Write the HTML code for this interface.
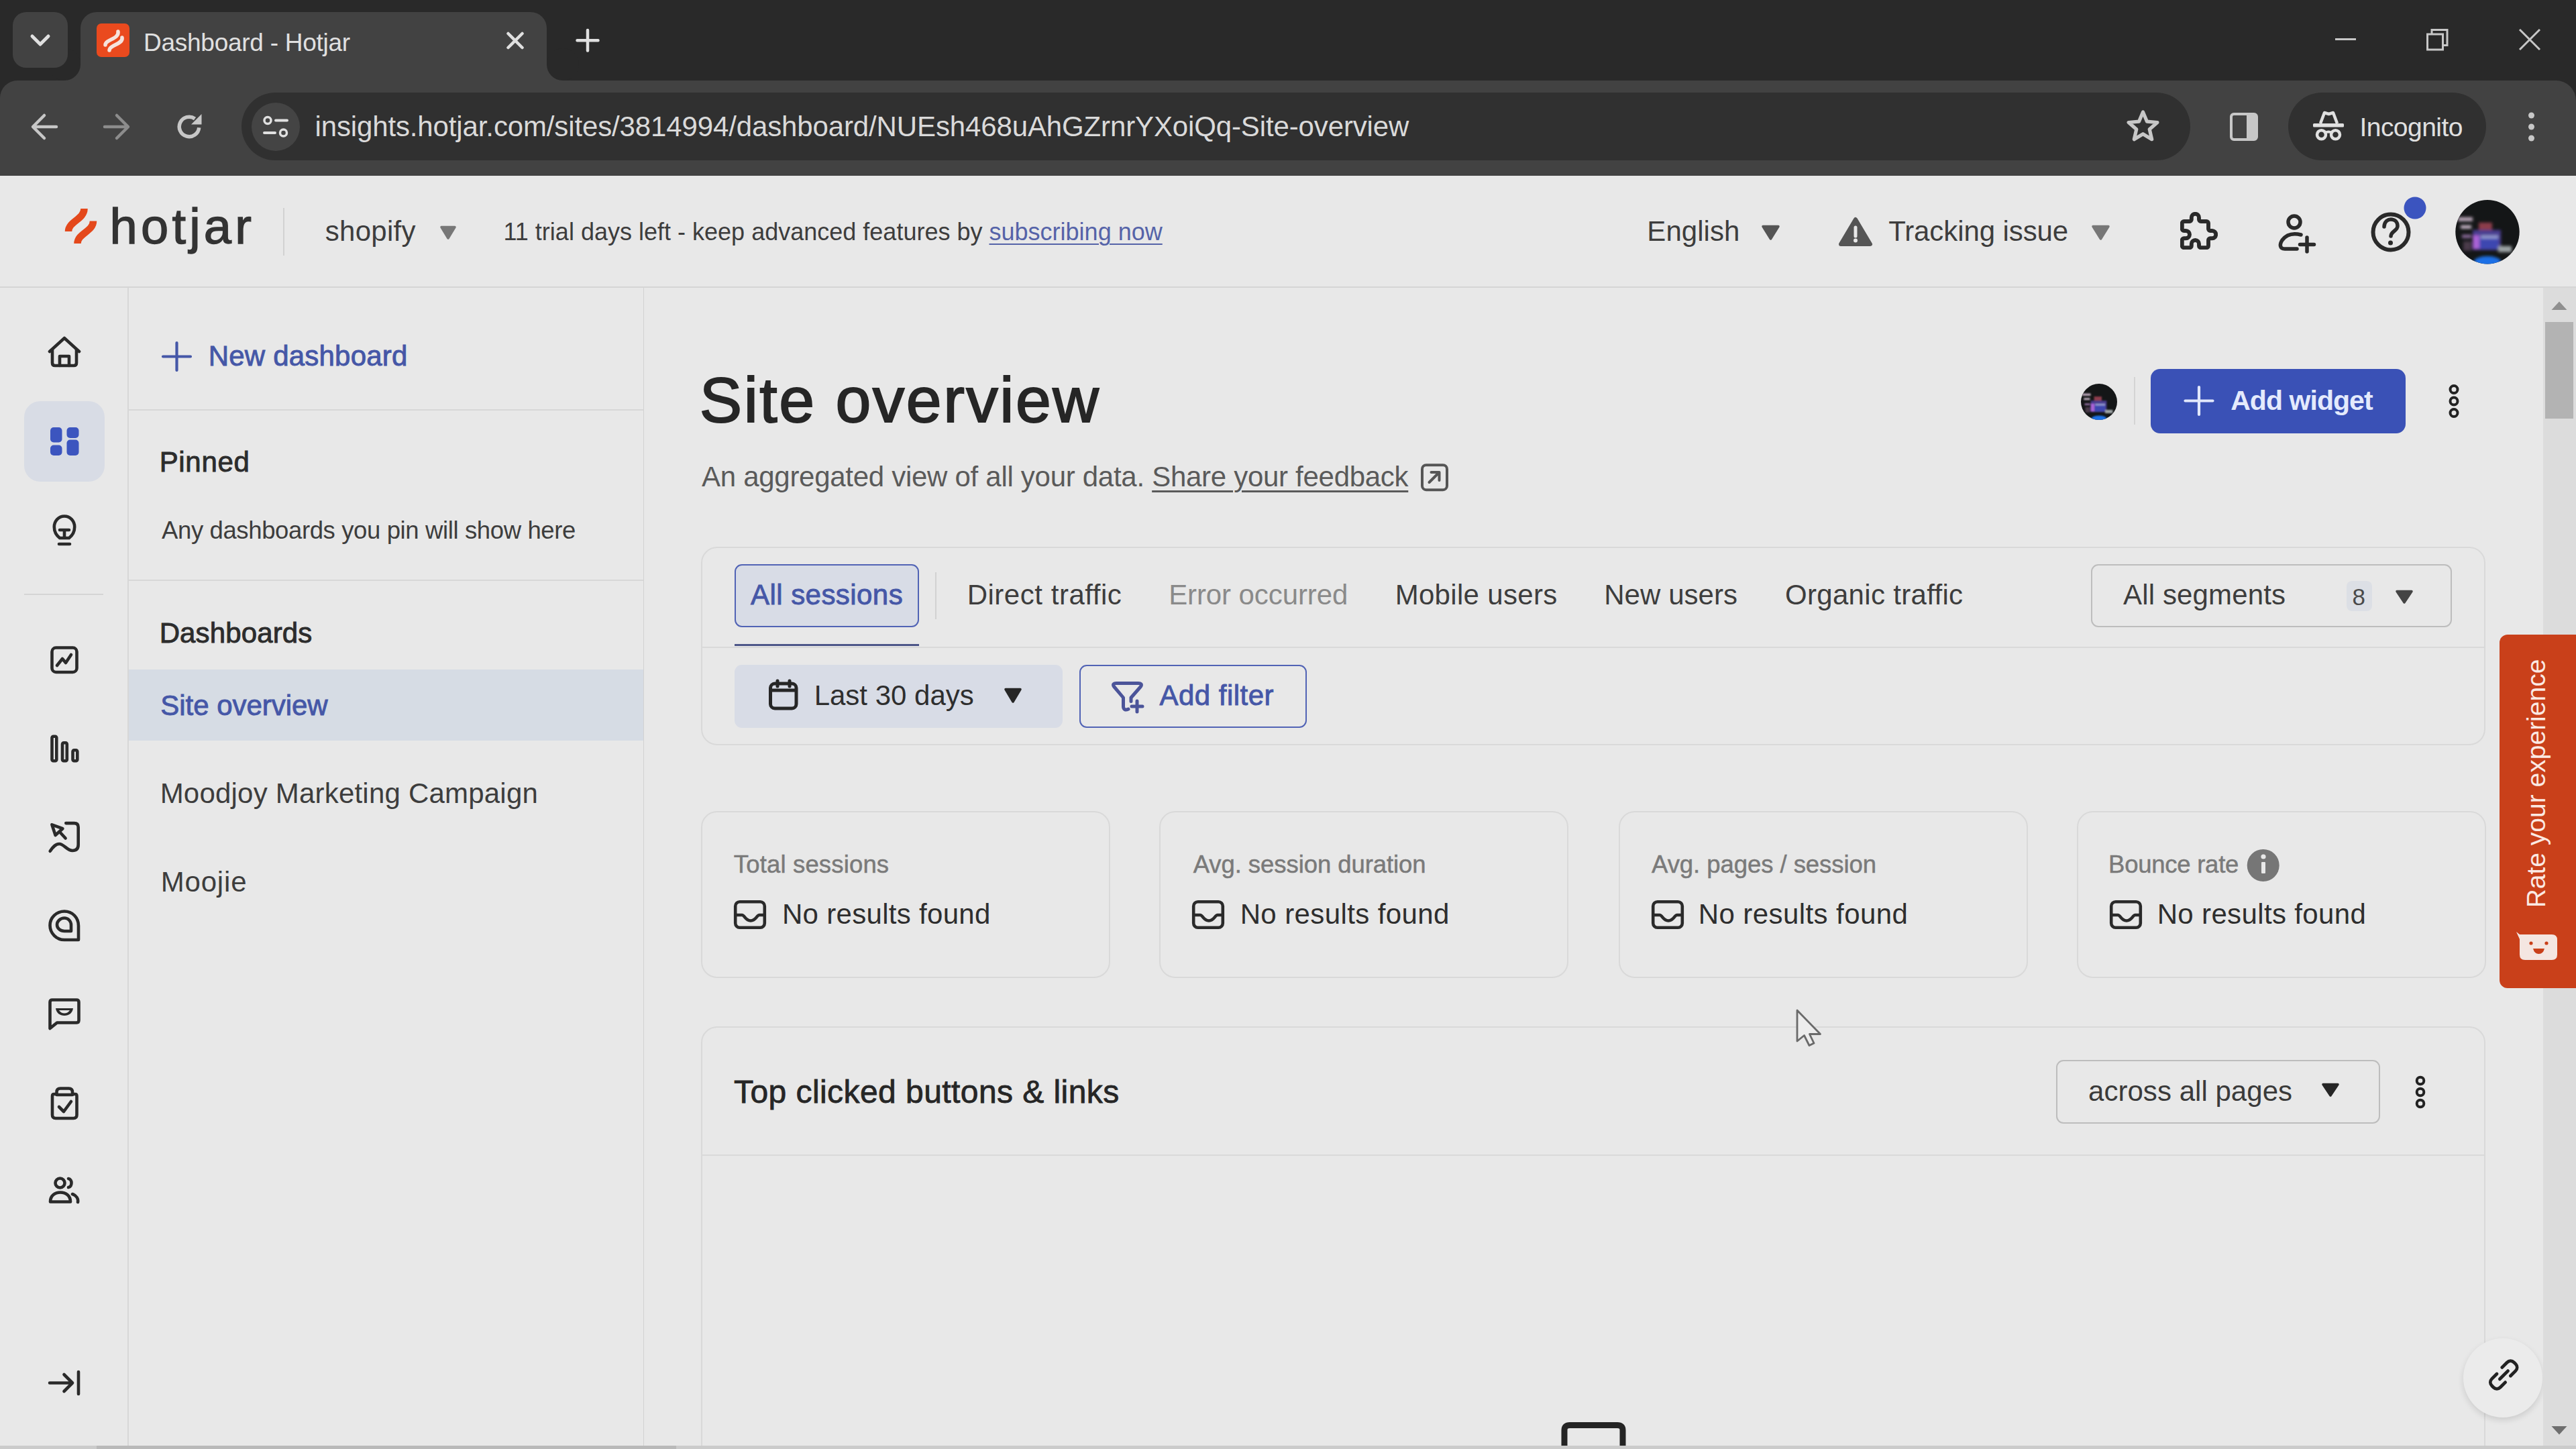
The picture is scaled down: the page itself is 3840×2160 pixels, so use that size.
<!DOCTYPE html>
<html><head><meta charset="utf-8"><title>Dashboard - Hotjar</title>
<style>
html,body{margin:0;padding:0;width:3840px;height:2160px;overflow:hidden;background:#e8e8e8;font-family:'Liberation Sans', sans-serif;}
</style></head><body>
<div style="position:absolute;left:0px;top:0px;width:3840px;height:262px;background:#292929"></div>
<div style="position:absolute;left:0px;top:120px;width:3840px;height:142px;background:#424242;border-radius:26px 30px 0 0"></div>
<div style="position:absolute;left:96px;top:96px;width:24px;height:24px;background:#424242"></div>
<div style="position:absolute;left:72px;top:72px;width:48px;height:48px;background:#292929;border-radius:50%"></div>
<div style="position:absolute;left:19px;top:18px;width:82px;height:83px;background:#424242;border-radius:20px"></div>
<svg style="position:absolute;left:0;top:0" width="3840" height="2160" viewBox="0 0 3840 2160" fill="none"><polyline points="48,54 60,66 72,54" stroke="#e0e0e0" stroke-width="5" stroke-linecap="round" stroke-linejoin="round"/></svg>
<div style="position:absolute;left:815px;top:96px;width:24px;height:24px;background:#424242"></div>
<div style="position:absolute;left:815px;top:72px;width:48px;height:48px;background:#292929;border-radius:50%"></div>
<div style="position:absolute;left:120px;top:18px;width:695px;height:110px;background:#424242;border-radius:24px 24px 0 0"></div>
<div style="position:absolute;left:144px;top:35px;width:49px;height:50px;background:#ea4a1e;border-radius:7px"></div>
<svg style="position:absolute;left:0;top:0" width="3840" height="2160" viewBox="0 0 3840 2160" fill="none"><path d="M157 67 C157 59 178 58 176 47" stroke="#f6e3dc" stroke-width="5.5" stroke-linecap="round"/><path d="M163 75 C163 67 184 66 182 56" stroke="#f6e3dc" stroke-width="5.5" stroke-linecap="round"/></svg>
<div style="position:absolute;left:214.04px;top:44.62px;font-size:37.00px;line-height:37.00px;letter-spacing:-0.261px;color:#e0e0e0;white-space:nowrap;">Dashboard - Hotjar</div>
<svg style="position:absolute;left:0;top:0" width="3840" height="2160" viewBox="0 0 3840 2160" fill="none"><path d="M757.5 50 L778.5 71 M778.5 50 L757.5 71" stroke="#e0e0e0" stroke-width="4.5" stroke-linecap="round"/><path d="M876 45 V75.5 M860.5 60.2 H891.5" stroke="#e0e0e0" stroke-width="4.5" stroke-linecap="round"/></svg>
<svg style="position:absolute;left:0;top:0" width="3840" height="2160" viewBox="0 0 3840 2160" fill="none"><path d="M50 189 H84 M66 172 L49 189 L66 206" stroke="#c7c7c7" stroke-width="4.5" stroke-linecap="round" stroke-linejoin="round"/><path d="M156 189 H190 M174 172 L191 189 L174 206" stroke="#8c8c8c" stroke-width="4.5" stroke-linecap="round" stroke-linejoin="round"/><path d="M296.7 190.3 A14.75 14.75 0 1 1 290.5 176.9" stroke="#c7c7c7" stroke-width="5.5"/><path d="M300.5 170 V185.5 H285 Z" fill="#c7c7c7"/></svg>
<div style="position:absolute;left:360px;top:138px;width:2905px;height:101px;background:#303030;border-radius:51px"></div>
<div style="position:absolute;left:375px;top:153px;width:72px;height:72px;background:#444444;border-radius:50%"></div>
<svg style="position:absolute;left:0;top:0" width="3840" height="2160" viewBox="0 0 3840 2160" fill="none"><circle cx="399" cy="179.5" r="5" stroke="#e0e0e0" stroke-width="3.5"/><path d="M411 179.5 H428" stroke="#e0e0e0" stroke-width="4" stroke-linecap="round"/><path d="M394 198 H410" stroke="#e0e0e0" stroke-width="4" stroke-linecap="round"/><circle cx="422.5" cy="198" r="5" stroke="#e0e0e0" stroke-width="3.5"/></svg>
<div style="position:absolute;left:469.48px;top:167.88px;font-size:42.00px;line-height:42.00px;letter-spacing:-0.130px;color:#dadada;white-space:nowrap;">insights.hotjar.com/sites/3814994/dashboard/NUEsh468uAhGZrnrYXoiQq-Site-overview</div>
<svg style="position:absolute;left:0;top:0" width="3840" height="2160" viewBox="0 0 3840 2160" fill="none"><polygon points="3194.5,167.0 3200.5,181.2 3215.9,182.5 3204.2,192.7 3207.7,207.7 3194.5,199.7 3181.3,207.7 3184.8,192.7 3173.1,182.5 3188.5,181.2" stroke="#c7c7c7" stroke-width="5.2" stroke-linejoin="round"/></svg>
<svg style="position:absolute;left:0;top:0" width="3840" height="2160" viewBox="0 0 3840 2160" fill="none"><rect x="3326" y="170" width="38" height="38" rx="4" stroke="#c7c7c7" stroke-width="4"/><rect x="3349" y="170" width="15" height="38" fill="#c7c7c7"/></svg>
<div style="position:absolute;left:3411px;top:138px;width:295px;height:101px;background:#303030;border-radius:51px"></div>
<svg style="position:absolute;left:0;top:0" width="3840" height="2160" viewBox="0 0 3840 2160" fill="none"><rect x="3448" y="184" width="46" height="5.5" rx="1.5" fill="#e0e0e0"/><path d="M3459 184 L3465 168 L3471.5 170 L3478 168 L3484 184" stroke="#e0e0e0" stroke-width="4.5" stroke-linejoin="round"/><circle cx="3460.5" cy="200.7" r="6.5" stroke="#e0e0e0" stroke-width="4.5"/><circle cx="3481.5" cy="200.7" r="6.5" stroke="#e0e0e0" stroke-width="4.5"/><path d="M3466 198 Q3471 195 3476 198" stroke="#e0e0e0" stroke-width="4"/></svg>
<div style="position:absolute;left:3517.49px;top:170.33px;font-size:39.00px;line-height:39.00px;letter-spacing:-0.546px;color:#e0e0e0;white-space:nowrap;">Incognito</div>
<svg style="position:absolute;left:0;top:0" width="3840" height="2160" viewBox="0 0 3840 2160" fill="none"><circle cx="3773.5" cy="172" r="4.5" fill="#c7c7c7"/><circle cx="3773.5" cy="189" r="4.5" fill="#c7c7c7"/><circle cx="3773.5" cy="206" r="4.5" fill="#c7c7c7"/></svg>
<svg style="position:absolute;left:0;top:0" width="3840" height="2160" viewBox="0 0 3840 2160" fill="none"><path d="M3481 58.5 H3512" stroke="#c7c7c7" stroke-width="3"/><rect x="3618.5" y="51" width="23" height="23" stroke="#c7c7c7" stroke-width="3"/><path d="M3625 51 V44.5 H3648 V67.5 H3641.5" stroke="#c7c7c7" stroke-width="3"/><path d="M3756 44 L3786 74 M3786 44 L3756 74" stroke="#c7c7c7" stroke-width="3"/></svg>
<div style="position:absolute;left:0px;top:427px;width:3840px;height:2px;background:#d5d5d5"></div>
<svg style="position:absolute;left:0;top:0" width="3840" height="2160" viewBox="0 0 3840 2160" fill="none"><path d="M102 345 C102 330 125.5 327 125.5 311" stroke="#e4481b" stroke-width="10.5"/><path d="M115.5 363 C115.5 348 139 345 139 329.5" stroke="#e4481b" stroke-width="10.5"/></svg>
<div style="position:absolute;left:163.55px;top:300.86px;font-size:74.11px;line-height:74.11px;letter-spacing:5.206px;color:#333333;white-space:nowrap;-webkit-text-stroke:1.4px #333333;">hotjar</div>
<div style="position:absolute;left:422px;top:310px;width:2px;height:71px;background:#d2d2d2"></div>
<div style="position:absolute;left:484.86px;top:323.88px;font-size:42.00px;line-height:42.00px;letter-spacing:0.261px;color:#3d3d3d;white-space:nowrap;">shopify</div>
<svg style="position:absolute;left:0;top:0" width="3840" height="2160" viewBox="0 0 3840 2160" fill="none"><path d="M658 338.5 H678 L668.0 355 Z" fill="#777777" stroke="#777777" stroke-width="3.5" stroke-linejoin="round"/></svg>
<div style="position:absolute;left:750.48px;top:327.97px;font-size:36.00px;line-height:36.00px;letter-spacing:0.006px;color:#3d3d3d;white-space:nowrap;">11 trial days left - keep advanced features by <span style="color:#5563a8;text-decoration:underline;text-decoration-thickness:2px;text-underline-offset:5px">subscribing now</span></div>
<div style="position:absolute;left:2455.34px;top:323.78px;font-size:42.00px;line-height:42.00px;letter-spacing:0.045px;color:#3d3d3d;white-space:nowrap;">English</div>
<svg style="position:absolute;left:0;top:0" width="3840" height="2160" viewBox="0 0 3840 2160" fill="none"><path d="M2628 337.5 H2651 L2639.5 356 Z" fill="#555555" stroke="#555555" stroke-width="3.5" stroke-linejoin="round"/></svg>
<svg style="position:absolute;left:0;top:0" width="3840" height="2160" viewBox="0 0 3840 2160" fill="none"><path d="M2766 327 L2788 364 H2744 Z" fill="#555555" stroke="#555555" stroke-width="6" stroke-linejoin="round"/><path d="M2766 339 V352" stroke="#e8e8e8" stroke-width="5" stroke-linecap="round"/><circle cx="2766" cy="358.5" r="3" fill="#e8e8e8"/></svg>
<div style="position:absolute;left:2815.16px;top:323.98px;font-size:42.00px;line-height:42.00px;letter-spacing:-0.088px;color:#3d3d3d;white-space:nowrap;">Tracking issue</div>
<svg style="position:absolute;left:0;top:0" width="3840" height="2160" viewBox="0 0 3840 2160" fill="none"><path d="M3120 337.5 H3143 L3131.5 356 Z" fill="#777777" stroke="#777777" stroke-width="3.5" stroke-linejoin="round"/></svg>
<svg style="position:absolute;left:3250px;top:316px;" width="56" height="56" viewBox="2 2 20 20" fill="none"><path d="M4 7h3a1 1 0 0 0 1 -1v-1a2 2 0 0 1 4 0v1a1 1 0 0 0 1 1h3a1 1 0 0 1 1 1v3a1 1 0 0 0 1 1h1a2 2 0 0 1 0 4h-1a1 1 0 0 0 -1 1v3a1 1 0 0 1 -1 1h-3a1 1 0 0 1 -1 -1v-1a2 2 0 0 0 -4 0v1a1 1 0 0 1 -1 1h-3a1 1 0 0 1 -1 -1v-3a1 1 0 0 1 1 -1h1a2 2 0 0 0 0 -4h-1a1 1 0 0 1 -1 -1v-3a1 1 0 0 1 1 -1" stroke="#2a2a2a" stroke-width="2.1" stroke-linejoin="round"/></svg>
<svg style="position:absolute;left:0;top:0" width="3840" height="2160" viewBox="0 0 3840 2160" fill="none"><circle cx="3420" cy="331" r="9" stroke="#2a2a2a" stroke-width="5.5"/><path d="M3424 371 H3406 C3398 371 3398 364 3402 358 C3408 350 3418 347 3430 350" stroke="#2a2a2a" stroke-width="5.5" stroke-linecap="round"/><path d="M3439 354 V375 M3428.5 364.5 H3449.5" stroke="#2a2a2a" stroke-width="5.5" stroke-linecap="round"/></svg>
<svg style="position:absolute;left:0;top:0" width="3840" height="2160" viewBox="0 0 3840 2160" fill="none"><circle cx="3564" cy="346" r="26.5" stroke="#2a2a2a" stroke-width="6"/><path d="M3554 338 C3554 331 3559 327 3564 327 C3570 327 3574 331 3574 337 C3574 344 3564 345 3564 352" stroke="#2a2a2a" stroke-width="5.5" stroke-linecap="round"/><circle cx="3563.5" cy="362" r="3.5" fill="#2a2a2a"/><circle cx="3600" cy="310" r="16.5" fill="#3b54bf"/></svg>
<svg style="position:absolute;left:0;top:0" width="3840" height="2160" viewBox="0 0 3840 2160" fill="none"><defs><clipPath id="avc"><circle cx="0" cy="0" r="47.7"/></clipPath><filter id="bl" x="-50%" y="-50%" width="200%" height="200%"><feGaussianBlur stdDeviation="2.2"/></filter></defs><g transform="translate(3708 345.8)"><circle cx="0" cy="0" r="47.7" fill="#141617"/><g clip-path="url(#avc)" filter="url(#bl)"><rect x="-44" y="-22" width="22" height="6" fill="#b9a6b8"/><rect x="-40" y="-10" width="16" height="5" fill="#cbb9cb"/><rect x="-38" y="4" width="14" height="5" fill="#8a6a9a"/><rect x="-36" y="14" width="12" height="14" fill="#4a3a4a"/><rect x="-13" y="-14" width="20" height="12" fill="#8c3c4c"/><rect x="-22" y="-3" width="42" height="30" fill="#4a3c90"/><rect x="-22" y="5" width="10" height="20" fill="#a862d6"/><rect x="-12" y="8" width="28" height="18" fill="#3e46b0"/><rect x="-10" y="5" width="26" height="5" fill="#9096cc"/><ellipse cx="0" cy="44" rx="20" ry="8" fill="#1f70e6"/><rect x="16" y="21" width="20" height="9" fill="#9ea4a6"/></g></g><g transform="translate(3129 599) scale(0.566)"><circle cx="0" cy="0" r="47.7" fill="#141617"/><g clip-path="url(#avc)" filter="url(#bl)"><rect x="-44" y="-22" width="22" height="6" fill="#b9a6b8"/><rect x="-40" y="-10" width="16" height="5" fill="#cbb9cb"/><rect x="-38" y="4" width="14" height="5" fill="#8a6a9a"/><rect x="-36" y="14" width="12" height="14" fill="#4a3a4a"/><rect x="-13" y="-14" width="20" height="12" fill="#8c3c4c"/><rect x="-22" y="-3" width="42" height="30" fill="#4a3c90"/><rect x="-22" y="5" width="10" height="20" fill="#a862d6"/><rect x="-12" y="8" width="28" height="18" fill="#3e46b0"/><rect x="-10" y="5" width="26" height="5" fill="#9096cc"/><ellipse cx="0" cy="44" rx="20" ry="8" fill="#1f70e6"/><rect x="16" y="21" width="20" height="9" fill="#9ea4a6"/></g></g></svg>
<div style="position:absolute;left:190px;top:429px;width:2px;height:1727px;background:#d7d7d7"></div>
<div style="position:absolute;left:36px;top:598px;width:120px;height:120px;background:#d8dce5;border-radius:24px"></div>
<div style="position:absolute;left:36px;top:885px;width:118px;height:2px;background:#d4d4d4"></div>
<svg style="position:absolute;left:0;top:0" width="3840" height="2160" viewBox="0 0 3840 2160" fill="none"><path d="M74 524 L96 504 L118 524" stroke="#2a2a2a" stroke-width="4.6" stroke-linecap="round" stroke-linejoin="round"/><path d="M78 521 V541 Q78 545 82 545 H110 Q114 545 114 541 V521" stroke="#2a2a2a" stroke-width="4.6" stroke-linecap="round" stroke-linejoin="round"/><path d="M89 545 V531 H103 V545" stroke="#2a2a2a" stroke-width="4.6" stroke-linecap="round" stroke-linejoin="round"/></svg>
<svg style="position:absolute;left:0;top:0" width="3840" height="2160" viewBox="0 0 3840 2160" fill="none"><rect x="75" y="637" width="17.5" height="22.5" rx="5" fill="#3c55bf"/><rect x="75" y="663.5" width="17.5" height="15.5" rx="5" fill="#3c55bf"/><rect x="99.5" y="637" width="18" height="16" rx="5" fill="#3c55bf"/><rect x="99.5" y="655.5" width="18" height="23.5" rx="5" fill="#3c55bf"/></svg>
<svg style="position:absolute;left:0;top:0" width="3840" height="2160" viewBox="0 0 3840 2160" fill="none"><path d="M89 802 C84 798 80.8 792 80.8 785.5 C80.8 776.5 87.5 769.5 96 769.5 C104.5 769.5 111.2 776.5 111.2 785.5 C111.2 792 108 798 103 802 Z" stroke="#2a2a2a" stroke-width="4.6" stroke-linecap="round" stroke-linejoin="round"/><path d="M89 790 H103 M96 790 V801" stroke="#2a2a2a" stroke-width="4.6" stroke-linecap="round" stroke-linejoin="round"/><path d="M88 811 H104" stroke="#2a2a2a" stroke-width="4.6" stroke-linecap="round" stroke-linejoin="round"/></svg>
<svg style="position:absolute;left:0;top:0" width="3840" height="2160" viewBox="0 0 3840 2160" fill="none"><rect x="77.5" y="965.5" width="37" height="36.5" rx="6" stroke="#2a2a2a" stroke-width="4.6" stroke-linecap="round" stroke-linejoin="round"/><path d="M85 992 L93 982 L98 988 L106 976" stroke="#2a2a2a" stroke-width="4.6" stroke-linecap="round" stroke-linejoin="round"/></svg>
<svg style="position:absolute;left:0;top:0" width="3840" height="2160" viewBox="0 0 3840 2160" fill="none"><rect x="77.5" y="1097.8" width="6.8" height="36.5" rx="2" stroke="#2a2a2a" stroke-width="4.6" stroke-linecap="round" stroke-linejoin="round"/><rect x="93" y="1107.3" width="6.8" height="27" rx="2" stroke="#2a2a2a" stroke-width="4.6" stroke-linecap="round" stroke-linejoin="round"/><rect x="108.5" y="1118.3" width="6.8" height="16" rx="2" stroke="#2a2a2a" stroke-width="4.6" stroke-linecap="round" stroke-linejoin="round"/></svg>
<svg style="position:absolute;left:0;top:0" width="3840" height="2160" viewBox="0 0 3840 2160" fill="none"><path d="M77.4 1229.3 L93.4 1235.2 L82.6 1245 Z" stroke="#2a2a2a" stroke-width="4.6" stroke-linecap="round" stroke-linejoin="round"/><path d="M90.2 1241.5 L97.6 1249.5" stroke="#2a2a2a" stroke-width="4.6" stroke-linecap="round" stroke-linejoin="round"/><path d="M98.3 1227.1 H110.7 Q116.7 1227.1 116.7 1233.1 V1259 Q116.7 1268 108 1268 C100 1268 95 1258 88.4 1258 C82 1258 78 1264 74.7 1268.8" stroke="#2a2a2a" stroke-width="4.6" stroke-linecap="round" stroke-linejoin="round"/></svg>
<svg style="position:absolute;left:0;top:0" width="3840" height="2160" viewBox="0 0 3840 2160" fill="none"><path d="M117 1401 H96 C84 1401 74.5 1391 74.5 1379.5 C74.5 1368 84 1358.5 96 1358.5 C108 1358.5 117 1368 117 1380 Z" stroke="#2a2a2a" stroke-width="4.6" stroke-linecap="round" stroke-linejoin="round"/><path d="M106 1388 H96 C90 1388 85 1384 85 1378.5 C85 1373 90 1368.5 96 1368.5 C101.5 1368.5 106 1373 106 1379 Z" stroke="#2a2a2a" stroke-width="4.6" stroke-linecap="round" stroke-linejoin="round"/></svg>
<svg style="position:absolute;left:0;top:0" width="3840" height="2160" viewBox="0 0 3840 2160" fill="none"><path d="M74.5 1533 V1494 Q74.5 1490.5 78 1490.5 H114 Q117.5 1490.5 117.5 1494 V1521 Q117.5 1524.5 114 1524.5 H85 Z" stroke="#2a2a2a" stroke-width="4.6" stroke-linecap="round" stroke-linejoin="round"/><path d="M83 1503 H109 C108 1510 103 1514 96 1514 C89 1514 84 1510 83 1503 Z" fill="#2a2a2a"/><path d="M88 1506 H104 C102 1509 99 1510.5 96 1510.5 C93 1510.5 90 1509 88 1506 Z" fill="#e8e8e8"/></svg>
<svg style="position:absolute;left:0;top:0" width="3840" height="2160" viewBox="0 0 3840 2160" fill="none"><path d="M83 1631 H80.5 Q78 1631 78 1634 V1662 Q78 1667 83 1667 H109.5 Q114.5 1667 114.5 1662 V1634 Q114.5 1631 112 1631 H109" stroke="#2a2a2a" stroke-width="4.6" stroke-linecap="round" stroke-linejoin="round"/><path d="M84.5 1632 V1628 Q84.5 1622.5 90 1622.5 H102.5 Q108 1622.5 108 1628 V1632 Z" stroke="#2a2a2a" stroke-width="4.6" stroke-linecap="round" stroke-linejoin="round"/><path d="M88 1650 L95 1657 L106 1642" stroke="#2a2a2a" stroke-width="4.6" stroke-linecap="round" stroke-linejoin="round"/></svg>
<svg style="position:absolute;left:0;top:0" width="3840" height="2160" viewBox="0 0 3840 2160" fill="none"><circle cx="89.5" cy="1763.5" r="7" stroke="#2a2a2a" stroke-width="4.6" stroke-linecap="round" stroke-linejoin="round"/><path d="M75 1791.5 C75 1782 82 1777.5 90 1777.5 C98 1777.5 105 1782 105 1791.5 Z" stroke="#2a2a2a" stroke-width="4.6" stroke-linecap="round" stroke-linejoin="round"/><path d="M102 1757 C108 1758 108 1769 102 1770" stroke="#2a2a2a" stroke-width="4.6" stroke-linecap="round" stroke-linejoin="round"/><path d="M108 1780 C114 1782 117 1787 116 1792" stroke="#2a2a2a" stroke-width="4.6" stroke-linecap="round" stroke-linejoin="round"/></svg>
<svg style="position:absolute;left:0;top:0" width="3840" height="2160" viewBox="0 0 3840 2160" fill="none"><path d="M74 2061.5 H108 M95.5 2049 L108 2061.5 L95.5 2074" stroke="#2a2a2a" stroke-width="4.6" stroke-linecap="round" stroke-linejoin="round"/><path d="M117 2045 V2078" stroke="#2a2a2a" stroke-width="4.6" stroke-linecap="round" stroke-linejoin="round"/></svg>
<div style="position:absolute;left:958.5px;top:429px;width:1.5px;height:1727px;background:#d2d2d2"></div>
<div style="position:absolute;left:192px;top:610px;width:766.5px;height:2px;background:#d7d7d7"></div>
<div style="position:absolute;left:192px;top:864px;width:766.5px;height:2px;background:#d7d7d7"></div>
<svg style="position:absolute;left:0;top:0" width="3840" height="2160" viewBox="0 0 3840 2160" fill="none"><path d="M263.5 511 V552 M243 531.5 H284" stroke="#4557a7" stroke-width="4.2" stroke-linecap="round"/></svg>
<div style="position:absolute;left:310.64px;top:510.28px;font-size:42.00px;line-height:42.00px;letter-spacing:0.211px;color:#4557a7;white-space:nowrap;-webkit-text-stroke:0.9px #4557a7;">New dashboard</div>
<div style="position:absolute;left:237.64px;top:668.38px;font-size:42.00px;line-height:42.00px;letter-spacing:0.688px;color:#2c2c2c;white-space:nowrap;-webkit-text-stroke:0.9px #2c2c2c;">Pinned</div>
<div style="position:absolute;left:241.00px;top:773.05px;font-size:36.50px;line-height:36.50px;letter-spacing:-0.380px;color:#3d3d3d;white-space:nowrap;">Any dashboards you pin will show here</div>
<div style="position:absolute;left:237.64px;top:922.78px;font-size:42.00px;line-height:42.00px;letter-spacing:0.128px;color:#2c2c2c;white-space:nowrap;-webkit-text-stroke:0.9px #2c2c2c;">Dashboards</div>
<div style="position:absolute;left:192px;top:998px;width:766.5px;height:106px;background:#d6dce4"></div>
<div style="position:absolute;left:239.32px;top:1030.78px;font-size:42.00px;line-height:42.00px;letter-spacing:-0.034px;color:#4557a7;white-space:nowrap;-webkit-text-stroke:0.9px #4557a7;">Site overview</div>
<div style="position:absolute;left:238.64px;top:1162.38px;font-size:42.00px;line-height:42.00px;letter-spacing:0.211px;color:#3d3d3d;white-space:nowrap;">Moodjoy Marketing Campaign</div>
<div style="position:absolute;left:239.64px;top:1294.18px;font-size:42.00px;line-height:42.00px;letter-spacing:0.831px;color:#3d3d3d;white-space:nowrap;">Moojie</div>
<div style="position:absolute;left:1042.80px;top:549.44px;font-size:95.00px;line-height:95.00px;letter-spacing:2.518px;color:#262626;white-space:nowrap;-webkit-text-stroke:2px #262626;">Site overview</div>
<div style="position:absolute;left:1046.00px;top:689.78px;font-size:42.00px;line-height:42.00px;letter-spacing:-0.287px;color:#5a5a5a;white-space:nowrap;">An aggregated view of all your data. <span style="text-decoration:underline;text-decoration-thickness:2.5px;text-underline-offset:6px">Share your feedback</span></div>
<svg style="position:absolute;left:0;top:0" width="3840" height="2160" viewBox="0 0 3840 2160" fill="none"><rect x="2120" y="693.2" width="37" height="37" rx="6" stroke="#555" stroke-width="4"/><path d="M2130.5 719 L2145 704.5 M2133.5 704 H2145.5 V716" stroke="#555" stroke-width="4" stroke-linecap="round" stroke-linejoin="round"/></svg>
<div style="position:absolute;left:3180.5px;top:562px;width:2px;height:71px;background:#d4d4d4"></div>
<div style="position:absolute;left:3206px;top:550px;width:380px;height:96px;background:#3a51b6;border-radius:14px"></div>
<svg style="position:absolute;left:0;top:0" width="3840" height="2160" viewBox="0 0 3840 2160" fill="none"><path d="M3278 577 V618 M3257.5 597.5 H3298.5" stroke="#e2e8fb" stroke-width="4.2" stroke-linecap="round"/></svg>
<div style="position:absolute;left:3325.18px;top:577.03px;font-size:41.00px;line-height:41.00px;letter-spacing:-0.941px;color:#e4eafc;white-space:nowrap;font-weight:bold;">Add widget</div>
<svg style="position:absolute;left:0;top:0" width="3840" height="2160" viewBox="0 0 3840 2160" fill="none"><circle cx="3658" cy="580.5" r="5.5" stroke="#222" stroke-width="4"/><circle cx="3658" cy="598" r="5.5" stroke="#222" stroke-width="4"/><circle cx="3658" cy="615.5" r="5.5" stroke="#222" stroke-width="4"/></svg>
<div style="position:absolute;left:1045px;top:815px;width:2660px;height:296px;box-sizing:border-box;border:2px solid #d9d9d9;border-radius:24px"></div>
<div style="position:absolute;left:1046px;top:964px;width:2658px;height:2px;background:#d9d9d9"></div>
<div style="position:absolute;left:1095px;top:841px;width:275px;height:94px;box-sizing:border-box;background:#d8dce6;border:2.5px solid #5163b5;border-radius:11px"></div>
<div style="position:absolute;left:1095px;top:959.5px;width:275px;height:3px;background:#4d5688"></div>
<div style="position:absolute;left:1119.00px;top:866.08px;font-size:42.00px;line-height:42.00px;letter-spacing:0.446px;color:#4557a7;white-space:nowrap;-webkit-text-stroke:0.9px #4557a7;">All sessions</div>
<div style="position:absolute;left:1393.5px;top:853px;width:2px;height:70px;background:#d2d2d2"></div>
<div style="position:absolute;left:1441.64px;top:866.08px;font-size:42.00px;line-height:42.00px;letter-spacing:0.533px;color:#3d3d3d;white-space:nowrap;">Direct traffic</div>
<div style="position:absolute;left:1742.14px;top:866.08px;font-size:42.00px;line-height:42.00px;letter-spacing:-0.091px;color:#8a8a8a;white-space:nowrap;">Error occurred</div>
<div style="position:absolute;left:2079.64px;top:866.08px;font-size:42.00px;line-height:42.00px;letter-spacing:0.320px;color:#3d3d3d;white-space:nowrap;">Mobile users</div>
<div style="position:absolute;left:2391.24px;top:866.08px;font-size:42.00px;line-height:42.00px;letter-spacing:0.053px;color:#3d3d3d;white-space:nowrap;">New users</div>
<div style="position:absolute;left:2660.92px;top:866.08px;font-size:42.00px;line-height:42.00px;letter-spacing:0.326px;color:#3d3d3d;white-space:nowrap;">Organic traffic</div>
<div style="position:absolute;left:3117px;top:841px;width:538px;height:94px;box-sizing:border-box;border:2.5px solid #bdbdbd;border-radius:11px"></div>
<div style="position:absolute;left:3165.00px;top:866.38px;font-size:42.00px;line-height:42.00px;letter-spacing:0.148px;color:#3d3d3d;white-space:nowrap;">All segments</div>
<div style="position:absolute;left:3498px;top:866px;width:38px;height:45px;background:#dcdfe5;border-radius:8px"></div>
<div style="position:absolute;left:3506.60px;top:871.82px;font-size:35.00px;line-height:35.00px;letter-spacing:0.000px;color:#4a4a4a;white-space:nowrap;">8</div>
<svg style="position:absolute;left:0;top:0" width="3840" height="2160" viewBox="0 0 3840 2160" fill="none"><path d="M3573 881.5 H3595 L3584.0 898 Z" fill="#444444" stroke="#444444" stroke-width="3.5" stroke-linejoin="round"/></svg>
<div style="position:absolute;left:1095px;top:991px;width:489px;height:94px;background:#d8dce6;border-radius:11px"></div>
<svg style="position:absolute;left:0;top:0" width="3840" height="2160" viewBox="0 0 3840 2160" fill="none"><rect x="1148.5" y="1019" width="38.5" height="37" rx="6.5" stroke="#262626" stroke-width="5"/><path d="M1149 1029 H1186.5" stroke="#262626" stroke-width="5"/><path d="M1159 1015 V1023 M1177 1015 V1023" stroke="#262626" stroke-width="5" stroke-linecap="round"/></svg>
<div style="position:absolute;left:1213.64px;top:1015.88px;font-size:42.00px;line-height:42.00px;letter-spacing:0.006px;color:#2e2e2e;white-space:nowrap;">Last 30 days</div>
<svg style="position:absolute;left:0;top:0" width="3840" height="2160" viewBox="0 0 3840 2160" fill="none"><path d="M1499 1027.5 H1521 L1510.0 1046 Z" fill="#262626" stroke="#262626" stroke-width="3.5" stroke-linejoin="round"/></svg>
<div style="position:absolute;left:1608.5px;top:991px;width:339px;height:94px;box-sizing:border-box;border:2.5px solid #5163b5;border-radius:11px"></div>
<svg style="position:absolute;left:0;top:0" width="3840" height="2160" viewBox="0 0 3840 2160" fill="none"><path d="M1686 1045.5 V1040 L1700 1024 C1703 1020.5 1701 1018.5 1697 1018.5 H1664 C1660 1018.5 1658 1020.5 1661 1024 L1674.5 1040 V1053 C1674.5 1058 1678 1059 1682 1057" stroke="#4b5499" stroke-width="5" stroke-linecap="round" stroke-linejoin="round"/><path d="M1695 1045 V1061 M1687 1053 H1703" stroke="#4b5499" stroke-width="5" stroke-linecap="round"/></svg>
<div style="position:absolute;left:1728.50px;top:1015.88px;font-size:42.00px;line-height:42.00px;letter-spacing:0.478px;color:#4557a7;white-space:nowrap;-webkit-text-stroke:0.9px #4557a7;">Add filter</div>
<div style="position:absolute;left:1045px;top:1209px;width:610px;height:249px;box-sizing:border-box;border:2px solid #d9d9d9;border-radius:24px"></div>
<div style="position:absolute;left:1093.77px;top:1270.65px;font-size:36.50px;line-height:36.50px;letter-spacing:0.160px;color:#7a7a7a;white-space:nowrap;-webkit-text-stroke:0.5px #7a7a7a;">Total sessions</div>
<svg style="position:absolute;left:0;top:0" width="3840" height="2160" viewBox="0 0 3840 2160" fill="none"><rect x="1096.2" y="1344.2" width="43.6" height="38.5" rx="6.5" stroke="#2a2a2a" stroke-width="4.6"/><path d="M1096.2 1364 H1106 C1110 1364 1111 1372.5 1119 1372.5 C1127 1372.5 1128 1364 1132 1364 H1139.8" stroke="#2a2a2a" stroke-width="4.6" stroke-linejoin="round"/></svg>
<div style="position:absolute;left:1165.94px;top:1341.88px;font-size:42.00px;line-height:42.00px;letter-spacing:0.306px;color:#2e2e2e;white-space:nowrap;">No results found</div>
<div style="position:absolute;left:1728px;top:1209px;width:610px;height:249px;box-sizing:border-box;border:2px solid #d9d9d9;border-radius:24px"></div>
<div style="position:absolute;left:1778.70px;top:1270.65px;font-size:36.50px;line-height:36.50px;letter-spacing:-0.068px;color:#7a7a7a;white-space:nowrap;-webkit-text-stroke:0.5px #7a7a7a;">Avg. session duration</div>
<svg style="position:absolute;left:0;top:0" width="3840" height="2160" viewBox="0 0 3840 2160" fill="none"><rect x="1779.2" y="1344.2" width="43.6" height="38.5" rx="6.5" stroke="#2a2a2a" stroke-width="4.6"/><path d="M1779.2 1364 H1789 C1793 1364 1794 1372.5 1802 1372.5 C1810 1372.5 1811 1364 1815 1364 H1822.8" stroke="#2a2a2a" stroke-width="4.6" stroke-linejoin="round"/></svg>
<div style="position:absolute;left:1848.64px;top:1341.88px;font-size:42.00px;line-height:42.00px;letter-spacing:0.392px;color:#2e2e2e;white-space:nowrap;">No results found</div>
<div style="position:absolute;left:2413px;top:1209px;width:610px;height:249px;box-sizing:border-box;border:2px solid #d9d9d9;border-radius:24px"></div>
<div style="position:absolute;left:2462.00px;top:1270.65px;font-size:36.50px;line-height:36.50px;letter-spacing:-0.058px;color:#7a7a7a;white-space:nowrap;-webkit-text-stroke:0.5px #7a7a7a;">Avg. pages / session</div>
<svg style="position:absolute;left:0;top:0" width="3840" height="2160" viewBox="0 0 3840 2160" fill="none"><rect x="2464.2" y="1344.2" width="43.6" height="38.5" rx="6.5" stroke="#2a2a2a" stroke-width="4.6"/><path d="M2464.2 1364 H2474 C2478 1364 2479 1372.5 2487 1372.5 C2495 1372.5 2496 1364 2500 1364 H2507.8" stroke="#2a2a2a" stroke-width="4.6" stroke-linejoin="round"/></svg>
<div style="position:absolute;left:2531.64px;top:1341.88px;font-size:42.00px;line-height:42.00px;letter-spacing:0.426px;color:#2e2e2e;white-space:nowrap;">No results found</div>
<div style="position:absolute;left:3096px;top:1209px;width:610px;height:249px;box-sizing:border-box;border:2px solid #d9d9d9;border-radius:24px"></div>
<div style="position:absolute;left:3143.08px;top:1270.65px;font-size:36.50px;line-height:36.50px;letter-spacing:-0.259px;color:#7a7a7a;white-space:nowrap;-webkit-text-stroke:0.5px #7a7a7a;">Bounce rate</div>
<svg style="position:absolute;left:0;top:0" width="3840" height="2160" viewBox="0 0 3840 2160" fill="none"><rect x="3147.2" y="1344.2" width="43.6" height="38.5" rx="6.5" stroke="#2a2a2a" stroke-width="4.6"/><path d="M3147.2 1364 H3157 C3161 1364 3162 1372.5 3170 1372.5 C3178 1372.5 3179 1364 3183 1364 H3190.8" stroke="#2a2a2a" stroke-width="4.6" stroke-linejoin="round"/></svg>
<div style="position:absolute;left:3215.64px;top:1341.88px;font-size:42.00px;line-height:42.00px;letter-spacing:0.359px;color:#2e2e2e;white-space:nowrap;">No results found</div>
<svg style="position:absolute;left:0;top:0" width="3840" height="2160" viewBox="0 0 3840 2160" fill="none"><circle cx="3373.7" cy="1290" r="24" fill="#767676"/><rect x="3371" y="1285" width="6" height="17" rx="1" fill="#e8e8e8"/><circle cx="3374" cy="1277" r="3.6" fill="#e8e8e8"/></svg>
<div style="position:absolute;left:1045px;top:1530px;width:2660px;height:700px;box-sizing:border-box;border:2px solid #d9d9d9;border-radius:24px"></div>
<div style="position:absolute;left:1046px;top:1721px;width:2658px;height:2px;background:#d9d9d9"></div>
<div style="position:absolute;left:1094.04px;top:1603.90px;font-size:48.00px;line-height:48.00px;letter-spacing:0.433px;color:#262626;white-space:nowrap;-webkit-text-stroke:0.8px #262626;">Top clicked buttons &amp; links</div>
<div style="position:absolute;left:3064.5px;top:1580px;width:483px;height:95px;box-sizing:border-box;border:2.5px solid #bdbdbd;border-radius:11px"></div>
<div style="position:absolute;left:3113.02px;top:1606.38px;font-size:42.00px;line-height:42.00px;letter-spacing:0.036px;color:#3a3a3a;white-space:nowrap;">across all pages</div>
<svg style="position:absolute;left:0;top:0" width="3840" height="2160" viewBox="0 0 3840 2160" fill="none"><path d="M3463 1616.5 H3485 L3474.0 1633 Z" fill="#262626" stroke="#262626" stroke-width="3.5" stroke-linejoin="round"/></svg>
<svg style="position:absolute;left:0;top:0" width="3840" height="2160" viewBox="0 0 3840 2160" fill="none"><circle cx="3608" cy="1611" r="5.3" stroke="#222" stroke-width="4"/><circle cx="3608" cy="1628" r="5.3" stroke="#222" stroke-width="4"/><circle cx="3608" cy="1645" r="5.3" stroke="#222" stroke-width="4"/></svg>
<svg style="position:absolute;left:0;top:0" width="3840" height="2160" viewBox="0 0 3840 2160" fill="none"><path d="M2332 2160 V2132 Q2332 2124.5 2340 2124.5 H2411 Q2419 2124.5 2419 2132 V2160" stroke="#242424" stroke-width="9"/></svg>
<svg style="position:absolute;left:0;top:0" width="3840" height="2160" viewBox="0 0 3840 2160" fill="none"><path d="M2679 1506 V1552 L2689.5 1543.5 L2697 1558.5 L2704 1555 L2697.5 1541.5 L2713.5 1541.5 Z" fill="#ededed" stroke="#6a6a6a" stroke-width="2.8" stroke-linejoin="round"/></svg>
<div style="position:absolute;left:3672px;top:1995px;width:118px;height:118px;background:#ebebeb;border-radius:50%;box-shadow:0 4px 10px rgba(0,0,0,0.12)"></div>
<svg style="position:absolute;left:0;top:0" width="3840" height="2160" viewBox="0 0 3840 2160" fill="none"><g transform="translate(3732 2049.7) scale(0.87) translate(-3731.5 -2049)"><path d="M3729 2036 L3737.5 2027.5 C3741 2024 3746 2024 3749.5 2027.5 L3752 2030 C3755.5 2033.5 3755.5 2038.5 3752 2042 L3743.5 2050.5" stroke="#222" stroke-width="5.5" stroke-linecap="round"/><path d="M3734.5 2061.5 L3726 2070 C3722.5 2073.5 3717.5 2073.5 3714 2070 L3711.5 2067.5 C3708 2064 3708 2059 3711.5 2055.5 L3720 2047" stroke="#222" stroke-width="5.5" stroke-linecap="round"/><path d="M3725 2056 L3739 2042" stroke="#222" stroke-width="5.5" stroke-linecap="round"/></g></svg>
<div style="position:absolute;left:3791px;top:429px;width:49px;height:1727px;background:#dcdcdc"></div>
<svg style="position:absolute;left:0;top:0" width="3840" height="2160" viewBox="0 0 3840 2160" fill="none"><path d="M3803.5 462 L3815 449.5 L3826.5 462 Z" fill="#8f8f8f"/></svg>
<div style="position:absolute;left:3794px;top:480px;width:42px;height:144px;background:#b3b3b3"></div>
<svg style="position:absolute;left:0;top:0" width="3840" height="2160" viewBox="0 0 3840 2160" fill="none"><path d="M3803.5 2126 L3815 2138.5 L3826.5 2126 Z" fill="#6e6e6e"/></svg>
<div style="position:absolute;left:3726px;top:946px;width:140px;height:527px;background:#c9401a;border-radius:12px"></div>
<div style="position:absolute;left:3780.5px;top:1168px;width:0;height:0"><div style="position:absolute;left:0;top:0;transform:translate(-50%,-50%) rotate(-90deg);white-space:nowrap;font-size:39px;line-height:40px;color:#fbe9e3">Rate your experience</div></div>
<svg style="position:absolute;left:0;top:0" width="3840" height="2160" viewBox="0 0 3840 2160" fill="none"><path d="M3756 1393 H3804 Q3812 1393 3812 1401 V1423 Q3812 1431 3804 1431 H3764 Q3756 1431 3756 1423 V1400 L3751 1389 Z" fill="#f4e6e1"/><circle cx="3773" cy="1406" r="2.6" fill="#c9401a"/><circle cx="3796" cy="1406" r="2.6" fill="#c9401a"/><path d="M3776 1414 H3793 Q3791 1422 3784.5 1422 Q3778 1422 3776 1414 Z" fill="#c9401a"/></svg>
<div style="position:absolute;left:0px;top:2155px;width:144px;height:5px;background:#cbcbcb"></div>
<div style="position:absolute;left:144px;top:2155px;width:864px;height:5px;background:#b9b9b9"></div>
<div style="position:absolute;left:1008px;top:2155px;width:2832px;height:5px;background:#cbcbcb"></div>
</body></html>
